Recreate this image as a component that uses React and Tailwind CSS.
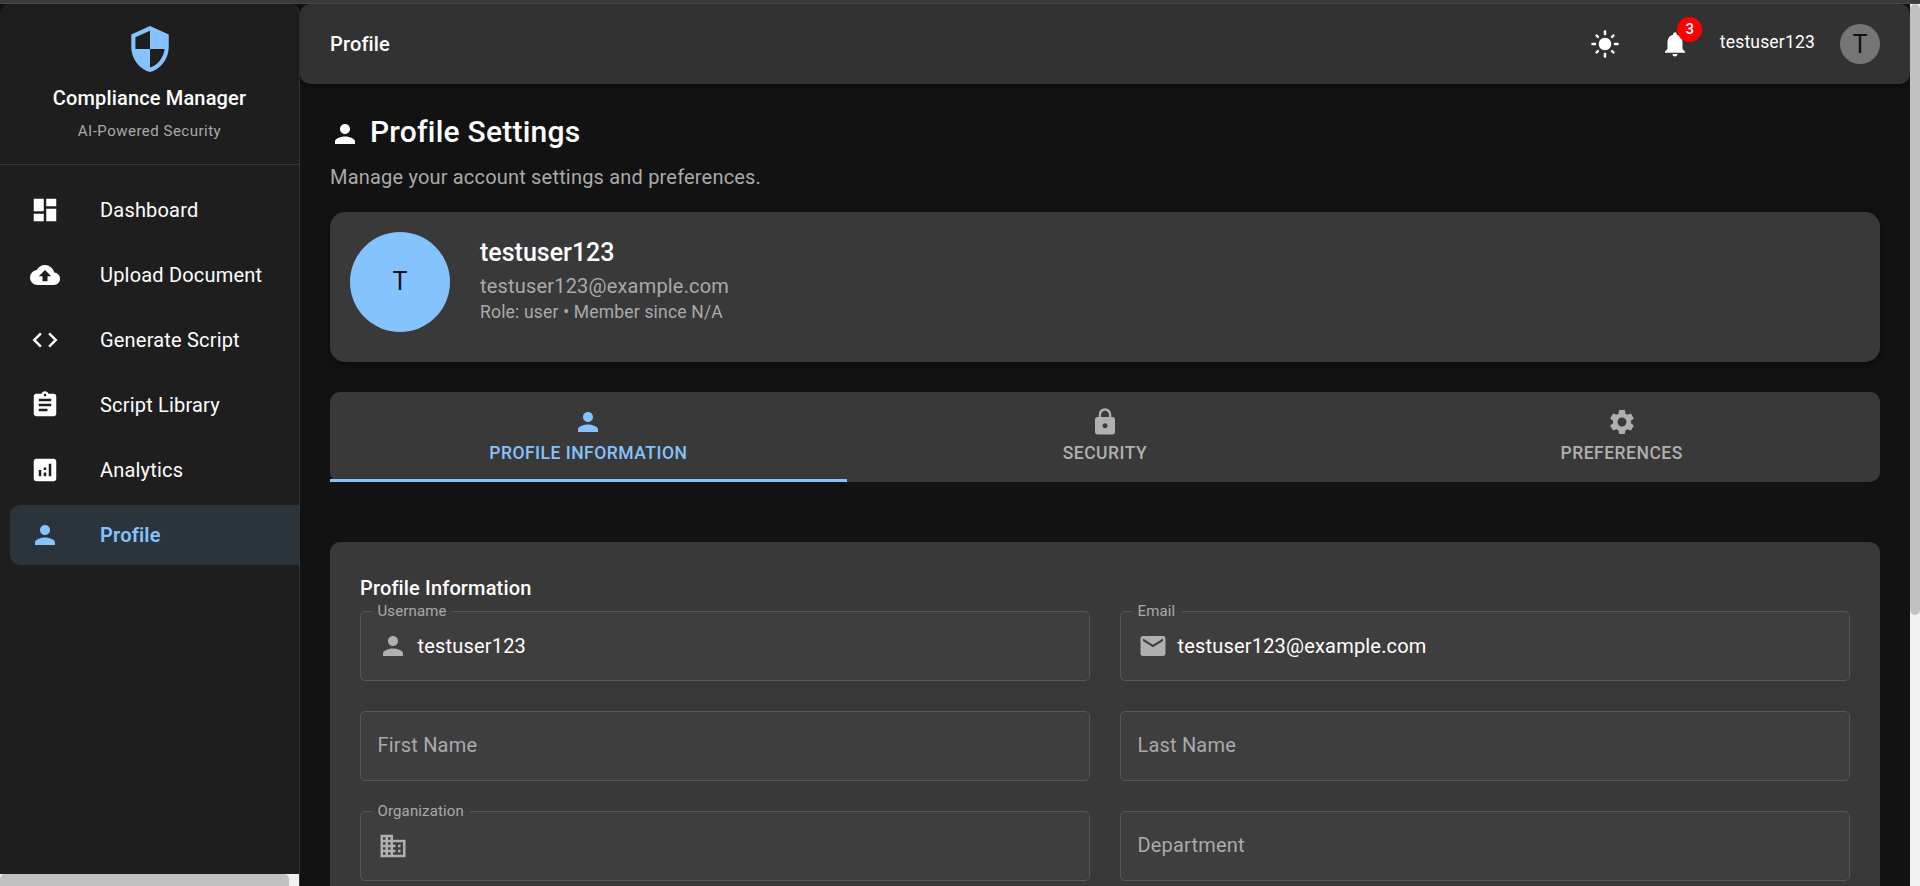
import {
  MdSecurity, MdDashboard, MdCloudUpload, MdCode, MdAssignment, MdAnalytics, MdPerson,
  MdLightMode, MdNotifications, MdLock, MdSettings, MdEmail, MdBusiness,
} from "react-icons/md";

const navItems = [
  { label: "Dashboard", icon: MdDashboard },
  { label: "Upload Document", icon: MdCloudUpload },
  { label: "Generate Script", icon: MdCode },
  { label: "Script Library", icon: MdAssignment },
  { label: "Analytics", icon: MdAnalytics },
  { label: "Profile", icon: MdPerson, active: true },
];

const tabs = [
  { label: "Profile Information", icon: MdPerson, active: true },
  { label: "Security", icon: MdLock },
  { label: "Preferences", icon: MdSettings },
];

const fields = [
  { label: "Username", icon: MdPerson, value: "testuser123" },
  { label: "Email", icon: MdEmail, value: "testuser123@example.com" },
  { label: "First Name" },
  { label: "Last Name" },
  { label: "Organization", icon: MdBusiness, value: "" },
  { label: "Department" },
];

function Sidebar() {
  return (
    <aside className="flex w-[300px] shrink-0 flex-col overflow-hidden rounded-t-[10px] border-r border-[#353535] bg-[#1e1e1e] antialiased">
      <div className="flex h-[161px] shrink-0 flex-col items-center border-b border-[#353535] pt-5">
        <MdSecurity className="size-[50px] text-[#85c3ff]" />
        <h1 className="mt-2.5 text-xl leading-[28px] font-medium tracking-[0.0075em]">Compliance Manager</h1>
        <p className="mt-[7px] text-[15px] leading-[25px] tracking-[0.0333em] text-[#aaaaaa]">AI-Powered Security</p>
      </div>
      <nav className="flex grow flex-col gap-[5px] pt-[15px] pl-2.5">
        {navItems.map(({ label, icon: Icon, active }) => (
          <a
            key={label}
            className={
              active
                ? "flex h-[60px] items-center rounded-l-[10px] bg-[#2b333b] pl-5 font-semibold text-[#85c3ff]"
                : "flex h-[60px] items-center pl-5"
            }
          >
            <Icon className="mr-10 size-[30px]" />
            <span className="text-xl leading-[30px] tracking-[0.0094em]">{label}</span>
          </a>
        ))}
      </nav>
      <div className="h-3 bg-[#f1f1f1]">
        <div className="h-full w-[289px] rounded-t-[5px] bg-[#c1c1c1]" />
      </div>
    </aside>
  );
}

function TopBar() {
  return (
    <header className="flex h-20 shrink-0 items-center rounded-[10px] bg-[#323232] px-[30px] antialiased shadow-[0_3px_5px_rgba(0,0,0,0.35)]">
      <h2 className="grow text-xl leading-8 font-medium tracking-[0.0075em]">Profile</h2>
      <MdLightMode className="mr-10 size-[30px]" />
      <div className="relative mr-[30px]">
        <MdNotifications className="size-[30px]" />
        <span className="absolute -top-[12.5px] left-[17.5px] flex size-[25px] items-center justify-center rounded-full bg-[#ff0000] text-[15px] leading-none font-medium">
          3
        </span>
      </div>
      <span className="mr-[25px] -mt-[3px] text-[17.5px] leading-[25px] tracking-[0.0107em]">testuser123</span>
      <div className="flex size-10 items-center justify-center rounded-full bg-[#757575] text-[25px] leading-none text-[#121212]">T</div>
    </header>
  );
}

function Field({ label, icon: Icon, value }) {
  if (!Icon) {
    return (
      <div className="flex h-[70px] items-center rounded-[5px] border border-[#565656] bg-[#3e3e3e] px-[16.5px] pb-[2px] text-xl tracking-[0.0094em] text-[#aaaaaa]">
        {label}
      </div>
    );
  }
  return (
    <div className="h-[70px] rounded-[5px] bg-[#3e3e3e]">
      <fieldset className="-mt-[9px] flex h-[79px] items-center rounded-[5px] border border-[#565656] pl-[10px]">
        <legend className="h-[19px] px-[6.5px] text-[15px] leading-[18px] tracking-[0.0094em] text-[#aaaaaa]">{label}</legend>
        <div className="-mt-[9px] flex items-center pl-[6.5px]">
          <Icon className="mr-[10px] size-[30px] text-[#b0b0b0]" />
          <span className="text-xl leading-[30px] tracking-[0.0094em]">{value}</span>
        </div>
      </fieldset>
    </div>
  );
}

export default function App() {
  return (
    <div className="flex h-[886px] w-[1920px] flex-col overflow-hidden bg-[#121212] font-[Roboto,sans-serif] text-white">
      <div className="h-1 shrink-0 border-b border-[#4a4a4a] bg-[#3a3a3a]" />
      <div className="flex min-h-0 grow">
        <Sidebar />
        <div className="flex min-w-0 grow flex-col">
          <TopBar />
          <main className="flex min-h-0 grow flex-col px-[30px]">
            <div className="mt-[28px] flex h-10 items-center gap-[10px]">
              <MdPerson className="mt-[4px] size-[30px]" />
              <h3 className="text-[30px] leading-10 font-medium tracking-[0.0074em]">Profile Settings</h3>
            </div>
            <p className="mt-[10px] text-xl leading-[30px] tracking-[0.0094em] text-[#aaaaaa]">
              Manage your account settings and preferences.
            </p>

            <section className="mt-5 flex h-[150px] shrink-0 gap-[30px] rounded-[15px] bg-[#393939] p-5 shadow-[0_3px_6px_rgba(0,0,0,0.4)]">
              <div className="flex size-[100px] items-center justify-center rounded-full bg-[#85c3ff] pb-[2px] text-[25px] leading-none text-[#121212]">
                T
              </div>
              <div>
                <h4 className="mt-[2px] text-[25px] leading-[37px] font-medium">testuser123</h4>
                <p className="text-xl leading-[30px] tracking-[0.0094em] text-[#aaaaaa]">testuser123@example.com</p>
                <p className="text-[17.5px] leading-[22px] tracking-[0.0107em] text-[#aaaaaa]">Role: user • Member since N/A</p>
              </div>
            </section>

            <div className="mt-[30px] grid h-[90px] shrink-0 grid-cols-3 rounded-[10px] bg-[#393939]">
              {tabs.map(({ label, icon: Icon, active }) => (
                <div
                  key={label}
                  className={
                    active
                      ? "flex flex-col items-center border-b-[3px] border-[#85c3ff] pt-[15px] text-[#85c3ff]"
                      : "flex flex-col items-center pt-[15px] text-[#b0b0b0]"
                  }
                >
                  <Icon className="size-[30px]" />
                  <span className="mt-[5px] text-[17.5px] leading-[22px] font-medium tracking-[0.0286em] uppercase">{label}</span>
                </div>
              ))}
            </div>

            <section className="mt-[60px] h-[344px] shrink-0 rounded-t-[10px] bg-[#393939] px-[30px] pt-[30px]">
              <h4 className="mb-[7px] text-xl leading-8 font-medium tracking-[0.0075em]">Profile Information</h4>
              <div className="grid grid-cols-2 gap-[30px]">
                {fields.map((field) => (
                  <Field key={field.label} {...field} />
                ))}
              </div>
            </section>
          </main>
        </div>
        <div className="w-2.5 shrink-0 bg-[#f1f1f1]">
          <div className="h-[611px] rounded-[5px] bg-[#c1c1c1]" />
        </div>
      </div>
    </div>
  );
}
